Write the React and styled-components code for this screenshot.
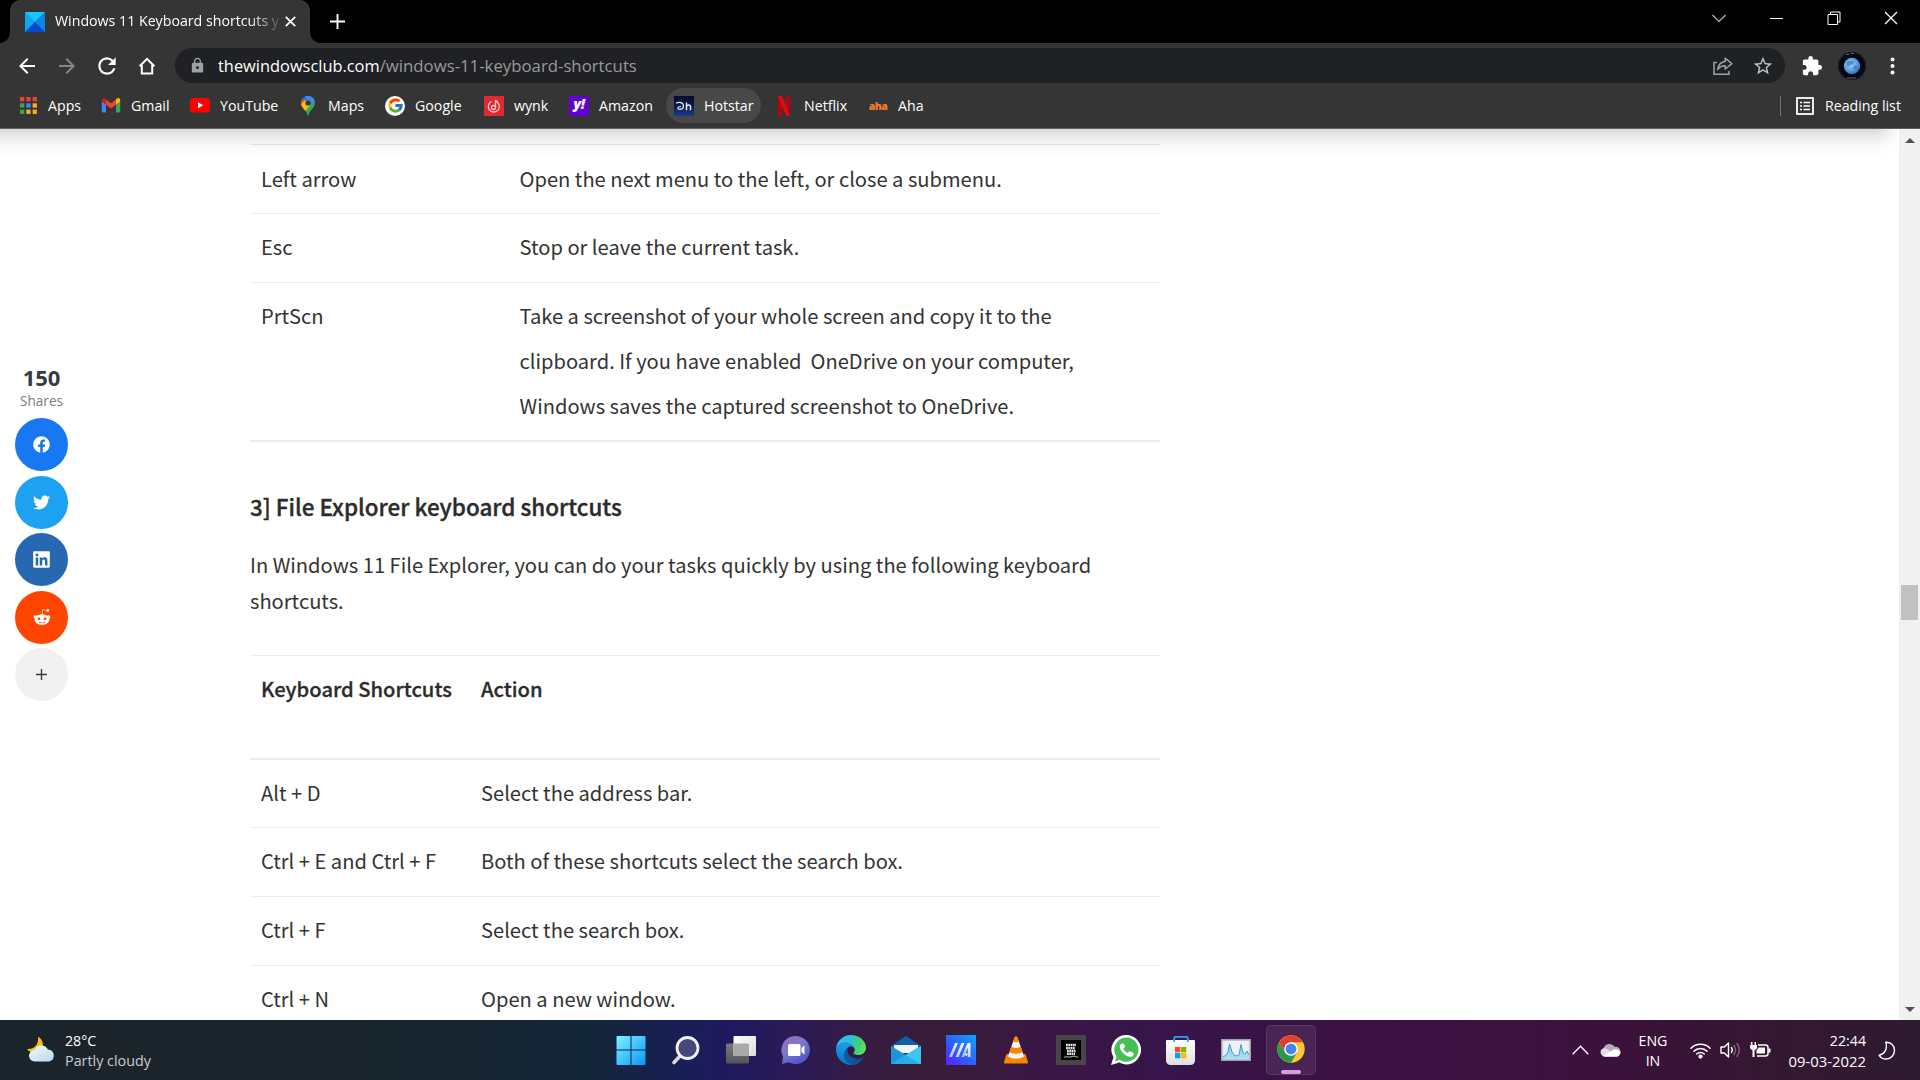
import React from "react";
import styled, { createGlobalStyle, css } from "styled-components";
import { MdArrowBack, MdArrowForward, MdRefresh, MdLock, MdStarBorder, MdExtension } from "react-icons/md";
import { FaFacebook, FaTwitter, FaLinkedin, FaRedditAlien } from "react-icons/fa";
import { FcGoogle } from "react-icons/fc";

const UI_FONT = '"Open Sans", "Noto Sans", sans-serif';
const ARTICLE_FONT = '"Noto Sans CJK SC", "Open Sans", sans-serif';

const GlobalStyle = createGlobalStyle`
  * { box-sizing: border-box; }
  body { margin: 0; background: #fff; overflow: hidden; }
  svg { display: block; flex: none; }
`;

const Screen = styled.div`
  width: 1920px;
  height: 1080px;
  display: flex;
  flex-direction: column;
  overflow: hidden;
  font-family: ${UI_FONT};
`;

/* ---------- tab strip ---------- */

const TabStrip = styled.header`
  height: 43px;
  background: #000;
  display: flex;
  align-items: stretch;
  padding-left: 10px;
`;

const Tab = styled.div`
  position: relative;
  width: 300px;
  background: #353535;
  border-radius: 10px 10px 0 0;
  display: flex;
  align-items: center;
  padding: 0 14px 0 15px;
  &::before,
  &::after {
    content: "";
    position: absolute;
    bottom: 0;
    width: 10px;
    height: 10px;
  }
  &::before {
    left: -10px;
    background: radial-gradient(circle at 0 0, #000 9.5px, #353535 10px);
  }
  &::after {
    right: -10px;
    background: radial-gradient(circle at 100% 0, #000 9.5px, #353535 10px);
  }
`;

const TabTitle = styled.span`
  margin-left: 10px;
  margin-right: auto;
  white-space: nowrap;
  font-size: 14.2px;
  line-height: 20px;
  color: #fff;
  padding-bottom: 1px;
  mask-image: linear-gradient(90deg, #000 194px, rgba(0, 0, 0, 0.5) 212px, rgba(0, 0, 0, 0.1) 225px);
`;

const NewTab = styled.button`
  border: 0;
  background: none;
  padding: 0;
  margin-left: 20px;
`;

const WindowControls = styled.div`
  margin-left: auto;
  display: flex;
`;

const ControlButton = styled.div`
  width: 57.5px;
  display: flex;
  justify-content: center;
  padding-top: 11px;
`;

/* ---------- toolbar ---------- */

const Toolbar = styled.div`
  height: 43px;
  background: #353535;
  display: flex;
  align-items: center;
  padding: 2px 8px 0 7px;
`;

const ToolSlot = styled.div`
  width: 40px;
  height: 35px;
  display: flex;
  align-items: center;
  justify-content: center;
  color: ${(p) => p.$color || "#fff"};
`;

const Omnibox = styled.div`
  flex: 1;
  height: 35px;
  margin: 0 7px 0 8px;
  border-radius: 18px;
  background: #202124;
  display: flex;
  align-items: center;
  padding: 0 2px 0 14px;
`;

const Url = styled.div`
  margin-left: 12px;
  margin-right: auto;
  font-size: 16.78px;
  line-height: 24px;
  color: #9a9a9a;
  padding-top: 1px;
`;

const Host = styled.span`
  color: #fff;
  font-size: 16.4px;
`;

/* ---------- bookmarks ---------- */

const BookmarkBar = styled.nav`
  height: 43px;
  background: #353535;
  border-bottom: 1px solid #5d5d5d;
  display: flex;
  align-items: center;
  gap: 5px;
  padding: 0 10px 3px;
`;

const Bookmark = styled.div`
  height: 35px;
  display: flex;
  align-items: center;
  padding: 0 8px;
  gap: 10px;
  border-radius: 18px;
  ${(p) => p.$active && css`background: #484848;`}
`;

const BookmarkIcon = styled.span`
  width: 20px;
  height: 20px;
  display: flex;
  align-items: center;
  justify-content: center;
`;

const BookmarkLabel = styled.span`
  width: ${(p) => p.$width}px;
  white-space: nowrap;
  font-size: 14.2px;
  line-height: 20px;
  color: #fff;
`;

const BarDivider = styled.span`
  width: 1px;
  height: 20px;
  margin-left: auto;
  margin-right: 1px;
  background: #707070;
`;

const Tile = styled.span`
  width: 20px;
  height: 20px;
  background: ${(p) => p.$bg};
  display: flex;
  align-items: center;
  justify-content: center;
`;

/* ---------- page ---------- */

const Viewport = styled.main`
  position: relative;
  height: 891px;
  display: flex;
  overflow: hidden;
  background: #fff;
`;

const ToolbarShadow = styled.div`
  position: absolute;
  top: 0;
  left: 0;
  right: 21px;
  height: 30px;
  background: linear-gradient(rgba(0, 0, 0, 0.15), rgba(0, 0, 0, 0.075) 9px, rgba(0, 0, 0, 0.02) 19px, transparent);
  mask-image: linear-gradient(90deg, #000 calc(100% - 22px), transparent);
`;

const ShareColumn = styled.aside`
  width: 68px;
  padding: 236px 0 0 15px;
  display: flex;
  flex-direction: column;
  align-items: center;
`;

const ShareCount = styled.div`
  font-size: 22px;
  line-height: 25px;
  font-weight: 700;
  color: #333c43;
`;

const ShareLabel = styled.div`
  font-size: 13.6px;
  line-height: 18px;
  color: #7d7d7d;
  margin: 2px 0 8px;
`;

const ShareButton = styled.div`
  width: 53px;
  height: 53px;
  margin-bottom: 4.5px;
  border-radius: 50%;
  background: ${(p) => p.$bg};
  color: #fff;
  display: flex;
  align-items: center;
  justify-content: center;
`;

const Article = styled.article`
  width: 910px;
  margin-left: 182px;
  padding-top: 15px;
  font-family: ${ARTICLE_FONT};
  font-size: 20.12px;
  color: #333;
`;

const Row = styled.div`
  display: grid;
  grid-template-columns: ${(p) => p.$first}px 1fr;
  min-height: 69px;
  padding: 10px 11px 12px;
  border-top: ${(p) => (p.$afterHead ? "2px" : "1px")} solid #ededed;
  line-height: 45px;
`;

const Table = styled.div`
  display: flex;
  flex-direction: column;
  ${(p) =>
    p.$closed &&
    css`
      border-bottom: 2px solid #ededed;
      ${Row}:first-child {
        padding-top: 11px;
        padding-bottom: 11px;
      }
    `}
`;

const HeadRow = styled(Row)`
  height: 103px;
  font-weight: 500;
  font-size: 20.2px;
  color: #2b2b2b;
  -webkit-text-stroke: 0.3px currentColor;
`;

const Cell = styled.div`
  white-space: pre-line;
`;

const Heading = styled.h3`
  margin: 46px 0 23px;
  font-size: 22.47px;
  line-height: 36px;
  font-weight: 500;
  color: #2b2b2b;
  -webkit-text-stroke: 0.35px currentColor;
`;

const Paragraph = styled.p`
  margin: 0 0 36px;
  line-height: 36px;
  white-space: pre-line;
`;

const Scrollbar = styled.div`
  width: 21px;
  margin-left: auto;
  background: #f1f1f1;
  display: flex;
  flex-direction: column;
  align-items: center;
  padding: 9px 0 8px;
`;

const Arrow = styled.span`
  width: 0;
  height: 0;
  border: 5px solid transparent;
  ${(p) => (p.$down ? "border-top-color: #505050; border-bottom: 0; margin-top: auto;" : "border-bottom-color: #505050; border-top: 0;")}
`;

const Thumb = styled.span`
  width: 17px;
  height: 35px;
  margin-top: 442px;
  background: #c1c1c1;
`;

/* ---------- taskbar ---------- */

const Taskbar = styled.footer`
  height: 60px;
  display: flex;
  align-items: center;
  color: #fff;
  background: linear-gradient(
    90deg,
    #1b242a 0, #1a242b 300px, #17252f 450px, #14263a 590px, #181f55 680px, #1f1a5e 730px,
    #2c1a55 800px, #371c40 870px, #371d38 940px, #3a1746 1040px, #37144a 1180px, #3c1243 1340px,
    #3d1140 1520px, #3a1239 1640px, #341832 1780px, #2e1a30 1920px
  );
`;

const Weather = styled.div`
  width: 603px;
  padding-left: 26px;
  display: flex;
  align-items: center;
  gap: 9px;
`;

const Lines = styled.div`
  width: ${(p) => p.$width || "auto"};
  padding-top: 2px;
  font-size: 14.2px;
  line-height: 20px;
  white-space: nowrap;
  text-align: ${(p) => p.$align || "left"};
`;

const Muted = styled.div`
  color: #c9cccd;
  font-size: 14.35px;
`;

const DateText = styled.div`
  font-size: 14.85px;
`;

const Apps = styled.div`
  display: flex;
`;

const AppSlot = styled.div`
  width: 55px;
  height: 60px;
  display: flex;
  align-items: center;
  justify-content: center;
`;

const ActiveTile = styled.div`
  width: 50px;
  height: 50px;
  border-radius: 5px;
  border: 1px solid rgba(255, 255, 255, 0.09);
  background: rgba(255, 255, 255, 0.08);
  display: flex;
  flex-direction: column;
  align-items: center;
  padding-top: 9px;
`;

const Indicator = styled.span`
  width: 20px;
  height: 4px;
  margin-top: auto;
  border-radius: 2px;
  background: #d99ce4;
`;

const Tray = styled.div`
  margin-left: auto;
  padding-right: 12px;
  display: flex;
  align-items: center;
`;

const TrayItem = styled.div`
  width: ${(p) => p.$w}px;
  display: flex;
  justify-content: center;
`;

/* ---------- browser icons ---------- */

const ClubFavicon = () => (
  <svg width="20" height="20" viewBox="0 0 20 20">
    <rect width="20" height="20" fill="#0a93e8" />
    <path d="M0 0h20L10 10z" fill="#16c8f8" />
    <path d="M0 0l10 10L0 20z" fill="#12a3ee" />
    <path d="M20 0L10 10l10 10z" fill="#0b86e0" />
    <path d="M0 20L10 10l10 10z" fill="#0848cc" />
  </svg>
);

const Cross = ({ size, stroke = 1.3 }) => (
  <svg width={size} height={size} viewBox="0 0 14 14" stroke="#fff" strokeWidth={stroke}>
    <path d="M1 1l12 12M13 1L1 13" />
  </svg>
);

const PlusIcon = ({ size, color, stroke }) => (
  <svg width={size} height={size} viewBox="0 0 16 16" stroke={color} strokeWidth={stroke}>
    <path d="M8 0v16M0 8h16" />
  </svg>
);

const HomeIcon = () => (
  <svg width="18" height="18" viewBox="0 0 18 18" fill="none" stroke="#fff" strokeWidth="2">
    <path d="M3.8 8v8.6h10.4V8" />
    <path d="M1.6 9.2L9 1.8l7.4 7.4" strokeLinejoin="miter" />
  </svg>
);

const ShareIcon = () => (
  <svg width="20" height="18" viewBox="0 0 20 18" fill="none" stroke="#a0a3a6" strokeWidth="1.5">
    <path d="M4 5.5H1v11.7h15V14" />
    <path d="M12.2 1.2L18.8 6.6l-6.6 5.4V8.8C8.700 8.800 6.500 10 4.600 12.600 5.200 8.300 7.600 4.900 12.200 4.400z" strokeLinejoin="round" />
  </svg>
);

const Avatar = () => (
  <svg width="28" height="28" viewBox="0 0 28 28">
    <defs>
      <radialGradient id="moon" cx=".42" cy=".4" r=".65">
        <stop offset="0" stopColor="#9fd2f8" />
        <stop offset=".6" stopColor="#5b9fe2" />
        <stop offset="1" stopColor="#2b62ae" />
      </radialGradient>
    </defs>
    <circle cx="14" cy="14" r="14" fill="#05080f" />
    <circle cx="14" cy="14" r="13.5" fill="none" stroke="#12233e" />
    <circle cx="14" cy="14" r="8.200" fill="url(#moon)" />
    <path d="M9 10c2-2 4 0 5-1s3 1 1 3-3 0-4 2-3-1-2-4zM16 14c2-1 4 0 3 2s-3 2-4 1z" fill="#2f6cb8" opacity=".6" />
    <path d="M8 2.500h3M13 1.500h3M9 26h9" stroke="#5b6167" />
  </svg>
);

const MoreDots = () => (
  <svg width="5" height="18" viewBox="0 0 5 18" fill="#fff">
    <circle cx="2.5" cy="2.500" r="2" />
    <circle cx="2.5" cy="9" r="2" />
    <circle cx="2.5" cy="15.500" r="2" />
  </svg>
);

const APP_COLORS = ["#ea4335", "#ea4335", "#ea4335", "#34a853", "#4285f4", "#fbae17", "#34a853", "#fbae17", "#fbae17"];

const AppsIcon = () => (
  <svg width="17" height="17" viewBox="0 0 17 17">
    {APP_COLORS.map((fill, i) => (
      <rect key={i} x={(i % 3) * 6.3} y={Math.floor(i / 3) * 6.3} width="4.3" height="4.3" fill={fill} />
    ))}
  </svg>
);

const GmailIcon = () => (
  <svg width="20" height="15" viewBox="0 0 20 15">
    <path d="M.8 2.500v10.800c0 .7.500 1.200 1.200 1.200h3V6.700z" fill="#4285f4" />
    <path d="M15 14.500h3c.7 0 1.200-.5 1.200-1.200V2.500L15 6.700z" fill="#34a853" />
    <path d="M15 1.500v5.300l4.200-3.200V2.300c0-1.900-2.100-2.900-3.500-1.700z" fill="#fbbc04" />
    <path d="M5 6.800V1.500l5 3.800 5-3.800v5.300l-5 3.800z" fill="#ea4335" />
    <path d="M.8 2.300v1.300L5 6.800V1.500L4.300.6C2.900-.5.800.5.800 2.300z" fill="#c5221f" />
  </svg>
);

const YouTubeIcon = () => (
  <svg width="20" height="15" viewBox="0 0 20 15">
    <rect width="20" height="14.500" rx="3.500" fill="#f00" />
    <path d="M8 4.200v6l5.200-3z" fill="#fff" />
  </svg>
);

const MapsIcon = () => (
  <svg width="14" height="20" viewBox="0 0 14 20">
    <defs>
      <clipPath id="pin">
        <path d="M7 0a7 7 0 0 0-7 7c0 2.300 1.100 3.900 2.700 5.800C4.700 15.200 6 16.800 6.400 19c.1.600.3.900.6.900s.5-.3.600-.9c.4-2.200 1.700-3.800 3.700-6.200C12.900 10.900 14 9.300 14 7a7 7 0 0 0-7-7z" />
      </clipPath>
    </defs>
    <g clipPath="url(#pin)">
      <rect width="14" height="20" fill="#34a853" />
      <path d="M-1 14L14 -3H-1z" fill="#1a73e8" />
      <path d="M4 0h10v5L7.500 9.500z" fill="#4285f4" />
      <path d="M-1 2L5 5.500-1 11z" fill="#ea4335" />
      <path d="M-1 9l5.200-5 4.800 5.400-6 7z" fill="#fbbc04" />
    </g>
    <circle cx="7" cy="7" r="2.600" fill="#353535" />
  </svg>
);

const GoogleBadge = styled.span`
  width: 20px;
  height: 20px;
  border-radius: 50%;
  background: #fff;
  display: flex;
  align-items: center;
  justify-content: center;
`;

const WynkIcon = () => (
  <Tile $bg="#de2a32">
    <svg width="14" height="14" viewBox="0 0 14 14" fill="none" stroke="#f7c6c8" strokeWidth="1.300">
      <path d="M4.500 2.500a5.500 5.500 0 1 0 5 .2" />
      <circle cx="6.500" cy="8.500" r="2" />
      <path d="M8.500 8.500V1.500c1 .2 2 .8 2.300 2" />
    </svg>
  </Tile>
);

const YahooText = styled.span`
  font: italic 800 14px/18px ${UI_FONT};
  letter-spacing: -0.5px;
  color: #fff;
  padding-bottom: 3px;
`;

const HotstarIcon = () => (
  <Tile $bg="linear-gradient(#070b2b, #0d1b50 55%, #1a3f8f)">
    <svg width="18" height="12" viewBox="0 0 18 12" fill="none" stroke="#e6ebf5" strokeWidth="1.200">
      <path d="M1 3.200c3-1.600 7.500-.8 7.500 2.800S4 10 3 8.600C2.200 7.300 4.500 6.500 6 6.500" />
      <path d="M11.500 2.500v7.800M11.500 7c.5-2.600 4-2.600 4 .2v3.100" strokeWidth="1.500" />
    </svg>
  </Tile>
);

const NetflixIcon = () => (
  <svg width="12" height="20" viewBox="0 0 12 20">
    <path d="M0 0h4v19.600L0 20zM8 0h4v20l-4-.4z" fill="#b1060f" />
    <path d="M0 0h4l8 20-4-.4z" fill="#e50914" />
  </svg>
);

const AhaText = styled.span`
  font: 800 10.5px/14px ${UI_FONT};
  letter-spacing: -0.6px;
  color: #f57a2c;
`;

const ReadingListIcon = () => (
  <svg width="18" height="18" viewBox="0 0 18 18" fill="none" stroke="#fff">
    <rect x="1" y="1" width="16" height="16" strokeWidth="1.800" />
    <path d="M4 5.500h2M4 9h2M4 12.500h2M7.500 5.500H14M7.500 9H14M7.500 12.500H14" strokeWidth="1.700" />
  </svg>
);

/* ---------- taskbar icons ---------- */

const WeatherIcon = () => (
  <svg width="30" height="28" viewBox="0 0 30 28">
    <defs>
      <linearGradient id="cloud" x2="1" y2="1">
        <stop offset="0" stopColor="#f3f8fc" />
        <stop offset="1" stopColor="#b9d9f0" />
      </linearGradient>
    </defs>
    <path d="M12 .5c5.500 3.500 6.500 10 2.500 14.500C10.500 18.500 4 17.500 1 13c8 .5 12-5 11-12.500z" fill="#fbbd13" />
    <path d="M9 25.500a5.700 5.700 0 0 1-.6-11.400A7.600 7.600 0 0 1 22 13.500a6.100 6.100 0 0 1 1.200 12z" fill="url(#cloud)" />
  </svg>
);

const StartIcon = () => (
  <svg width="30" height="30" viewBox="0.5 0 30 30">
    <defs>
      <linearGradient id="win" x2="1" y2="1">
        <stop offset="0" stopColor="#7ff3ff" />
        <stop offset=".5" stopColor="#3fc5fd" />
        <stop offset="1" stopColor="#0c94fb" />
      </linearGradient>
    </defs>
    <path d="M2 1h13v13.500H1V2q0-1 1-1zM16 1h13q1 0 1 1v12.500H16zM1 15.500h14V30H2q-1 0-1-1zM16 15.500h14V29q0 1-1 1H16z" fill="url(#win)" />
  </svg>
);

const SearchIcon = () => (
  <svg width="30" height="30" viewBox="1 0 30 30">
    <path d="M10.500 20.500L4 27.500" stroke="#d8d8da" strokeWidth="3.600" strokeLinecap="round" />
    <circle cx="17.500" cy="13" r="10.500" fill="#47477c" stroke="#f0f0f1" strokeWidth="2.800" />
  </svg>
);

const TaskViewIcon = () => (
  <svg width="30" height="30" viewBox="0 0 30 30">
    <defs>
      <linearGradient id="tv" x2="1" y2="1">
        <stop offset="0" stopColor="#fff" />
        <stop offset="1" stopColor="#dcdcdc" />
      </linearGradient>
      <linearGradient id="tvd" x2="0" y2="1">
        <stop offset="0" stopColor="#797979" />
        <stop offset="1" stopColor="#555" />
      </linearGradient>
    </defs>
    <rect x="0" y="8.500" width="23" height="20" rx="1" fill="url(#tvd)" />
    <rect x="7.500" y="1" width="22.500" height="20" rx="1" fill="url(#tv)" />
    <path d="M7.500 8.500H22a1 1 0 0 1 1 1V21H8.500a1 1 0 0 1-1-1z" fill="#a9a9a9" />
  </svg>
);

const ChatIcon = () => (
  <svg width="30" height="30" viewBox="0 0 30 30">
    <defs>
      <linearGradient id="chat" x2=".6" y2="1">
        <stop offset="0" stopColor="#9a6fb8" />
        <stop offset=".5" stopColor="#7a77cf" />
        <stop offset="1" stopColor="#5057c8" />
      </linearGradient>
    </defs>
    <path d="M15 1a14 14 0 1 1-7 26.200L1 29l1-7.500A14 14 0 0 1 15 1z" fill="url(#chat)" />
    <rect x="7" y="9" width="12.500" height="12" rx="1.500" fill="#fff" />
    <path d="M20.500 13l3-2.500v9l-3-2.500z" fill="#fff" />
  </svg>
);

const EdgeIcon = () => (
  <svg width="30" height="30" viewBox="0 0 256 256">
    <defs>
      <linearGradient id="e1" x1=".2" x2="1" y1=".6" y2=".6">
        <stop offset="0" stopColor="#0c59a4" />
        <stop offset="1" stopColor="#114a8b" />
      </linearGradient>
      <linearGradient id="e2" x1=".6" x2=".3" y1="0" y2="1">
        <stop offset="0" stopColor="#1b9de2" />
        <stop offset=".4" stopColor="#1595df" />
        <stop offset="1" stopColor="#0670c4" />
      </linearGradient>
      <linearGradient id="e3" x1="0" x2="1" y1=".3" y2=".5">
        <stop offset="0" stopColor="#35c1f1" />
        <stop offset=".45" stopColor="#2ebfd4" />
        <stop offset=".75" stopColor="#3fcf7e" />
        <stop offset="1" stopColor="#66e24f" />
      </linearGradient>
    </defs>
    <g transform="translate(-4.63 -4.92)">
      <path fill="url(#e1)" d="M235.68 195.46a93.73 93.73 0 0 1-10.54 4.71 101.87 101.87 0 0 1-35.900 6.460c-47.320 0-88.540-32.550-88.540-74.320A31.480 31.480 0 0 1 117.130 105c-42.800 1.800-53.800 46.400-53.800 72.530 0 73.880 68.090 81.370 82.760 81.370 7.910 0 19.840-2.300 27-4.560l1.310-.44a128.340 128.340 0 0 0 66.600-52.800 4 4 0 0 0-5.320-5.640z" />
      <path fill="url(#e2)" d="M110.34 246.34A79.2 79.2 0 0 1 87.6 225a80.720 80.720 0 0 1 29.530-120c3.120-1.470 8.450-4.130 15.540-4a32.350 32.350 0 0 1 25.690 13 31.880 31.880 0 0 1 6.360 18.660c0-.21 24.460-79.600-80-79.600-43.900 0-80 41.660-80 78.210a130.150 130.150 0 0 0 12.110 56 128 128 0 0 0 156.380 67.110 75.550 75.550 0 0 1-62.780-8z" />
      <path fill="url(#e3)" d="M156.94 153.78c-.81 1.05-3.300 2.500-3.300 5.660 0 2.610 1.700 5.120 4.720 7.230 14.380 10 41.490 8.680 41.560 8.680a59.560 59.560 0 0 0 30.270-8.350 61.380 61.380 0 0 0 30.430-52.880c.26-22.410-8-37.310-11.340-43.910C228.090 28.760 182.350 4.920 132.610 4.920a128 128 0 0 0-128 126.200c.48-36.540 36.800-66.050 80-66.050 3.500 0 23.460.34 42 10.070 16.340 8.580 24.900 18.940 30.850 29.210 6.180 10.670 7.280 24.150 7.280 29.520s-2.740 13.330-7.800 19.910z" />
    </g>
  </svg>
);

const MailIcon = () => (
  <svg width="30" height="30" viewBox="0 0 30 30">
    <path d="M0 11L14 1.600q1-.7 2 0L30 11l-3 8H3z" fill="#0f5fa8" />
    <path d="M3 10h24v8H3z" fill="#f1f3f5" />
    <path d="M0 11l15 9 15-9v17q0 1-1 1H1q-1 0-1-1z" fill="#1c93da" />
    <path d="M30 11L14 20.500 29 29q1 0 1-1z" fill="#3cc6f4" />
    <path d="M0 28.500L14.500 20 29 29H1q-1 0-1-.5z" fill="#27aeea" />
  </svg>
);

const MyAsusIcon = () => (
  <svg width="30" height="30" viewBox="0 0 30 30">
    <defs>
      <linearGradient id="asus" x1="1" x2="0" y2="1">
        <stop offset="0" stopColor="#12a2ff" />
        <stop offset=".5" stopColor="#2866ff" />
        <stop offset="1" stopColor="#5a1dff" />
      </linearGradient>
      <linearGradient id="stroke" x1="1" x2="0" y2="1">
        <stop offset="0" stopColor="#fff" />
        <stop offset="1" stopColor="#a9b9ff" />
      </linearGradient>
    </defs>
    <rect width="30" height="30" fill="url(#asus)" />
    <path d="M3 22L9 8h3L6 22zM9.500 22l6-14h3l-6 14z" fill="url(#stroke)" />
    <path d="M15.500 22L21.500 8H24.500V22H21.800V12.500L18 22z" fill="url(#stroke)" />
    <path d="M19 19.500h2.500" stroke="#eef3ff" strokeWidth="2" />
  </svg>
);

const VlcIcon = () => (
  <svg width="26" height="28" viewBox="0 0 26 28">
    <path d="M3.500 18h19l2.500 8q.3 1.500-1 1.500H2q-1.300 0-1-1.500z" fill="#f98500" />
    <path d="M13 .5q1.300 0 1.700 1.500L21 20.500q-8 4.500-16 0L11.300 2Q11.700.5 13 .5z" fill="#f6f6f6" />
    <path d="M13 .5q1.300 0 1.700 1.500l1.200 3.600q-2.900 1.500-5.800 0L11.300 2Q11.700.5 13 .5zM8.300 10.800q4.700 2.400 9.400 0l1.800 5.400q-6.500 3.300-13 0z" fill="#f98500" />
  </svg>
);

const GtaBox = styled.div`
  width: 30px;
  height: 30px;
  border: 5px solid #474747;
  background: #000;
  display: flex;
  align-items: center;
  justify-content: center;
`;

const GtaIcon = () => (
  <GtaBox>
    <svg width="18" height="18" viewBox="0 0 18 18" fill="none" stroke="#e8e8e8">
      <path d="M4 4h10M4 7.200h9M5 10h8.500M5 12.800h8" strokeWidth="2.300" strokeDasharray="1.800 .5" />
      <path d="M2 16.300c3-1.600 5 .6 8-.8s3 .8 6 .6" strokeWidth="1.100" stroke="#a8a8a8" />
    </svg>
  </GtaBox>
);

const WhatsAppIcon = () => (
  <svg width="30" height="30" viewBox="0 0 30 30">
    <path d="M15.300 0a14.700 14.700 0 1 1-7 27.600L0 30l2.500-7.800A14.700 14.700 0 0 1 15.300 0z" fill="#fff" />
    <path d="M15.300 2.600a12.100 12.100 0 1 1-6.600 22.200L4 26.200l1.500-4.600A12.100 12.100 0 0 1 15.300 2.600z" fill="#45c154" />
    <path transform="translate(6.200 5.500) scale(.76)" d="M20.010 15.380c-1.230 0-2.420-.6-3.530-1.260a.977.977 0 0 0-1.010.24l-1.570 1.970c-2.830-1.350-4.480-2.900-5.890-5.830l1.950-1.660c.27-.28.35-.67.24-1.020-.37-1.110-.86-2.300-1.160-3.230-.2-.54-.45-.69-.99-.69H6.190C4.650 4.500 3 6.240 3.500 8.990 4.500 15.280 11.730 21.500 17.010 21.500c2.710 0 4.490-1.630 4.490-3.180 0-1.500 0-2.200-1.490-2.940z" fill="#fff" />
  </svg>
);

const StoreIcon = () => (
  <svg width="30" height="30" viewBox="0.5 0 30 30">
    <defs>
      <linearGradient id="bag" x2="0" y2="1">
        <stop offset="0" stopColor="#fff" />
        <stop offset="1" stopColor="#dedede" />
      </linearGradient>
    </defs>
    <path d="M8.700 8V3q0-1.200 1.200-1.200h11.200q1.200 0 1.200 1.200v5" fill="none" stroke="#22a7e8" strokeWidth="1.800" />
    <path d="M.5 6q0-1 1-1h27q1 0 1 1v19q0 5-5 5h-19q-5 0-5-5z" fill="url(#bag)" />
    <path d="M8.700 7V4.500M22.300 7V4.500" stroke="#22a7e8" strokeWidth="1.800" />
    <rect x="9.500" y="12" width="5.300" height="5.300" fill="#f25022" />
    <rect x="15.500" y="12" width="5.300" height="5.300" fill="#7fba00" />
    <rect x="9.500" y="18" width="5.300" height="5.300" fill="#00a4ef" />
    <rect x="15.500" y="18" width="5.300" height="5.300" fill="#ffb900" />
  </svg>
);

const MonitorIcon = () => (
  <svg width="30" height="24" viewBox="0 0 30 24">
    <defs>
      <linearGradient id="graph" x2="0" y2="1">
        <stop offset="0" stopColor="#8fcdf0" />
        <stop offset="1" stopColor="#a8e0fb" />
      </linearGradient>
    </defs>
    <rect x=".8" y="1.800" width="28.400" height="20.400" fill="#edf1f4" stroke="#9da5ab" strokeWidth="1.600" />
    <path d="M2 19l3-2 2-3 2-8 2 8 2 3 3 1 2-1 2-10 2 8 2 1 2-3 2 5v3H2z" fill="url(#graph)" />
    <path d="M2 19l3-2 2-3 1.500-8L11 14l2 3 3 1 2-1 2-10.500 2 8.500 2 1 2-3 2 4" fill="none" stroke="#3d9bd0" strokeWidth="1" />
  </svg>
);

const ChromeIcon = () => (
  <svg width="28" height="28" viewBox="0 0 48 48">
    <circle cx="24" cy="24" r="23.500" fill="#fbc934" />
    <path d="M24 12.250h20.350A23.500 23.500 0 0 0 3.650 12.250L13.800 29.900z" fill="#e2402f" />
    <path d="M3.650 12.250A23.500 23.500 0 0 0 24 47.500l10.200-17.620L24 35.700 13.800 29.900z" fill="#269b4c" />
    <circle cx="24" cy="24" r="11.700" fill="#fff" />
    <circle cx="24" cy="24" r="9.300" fill="#4285f4" />
  </svg>
);

const ChevronUp = () => (
  <svg width="17" height="10" viewBox="0 0 17 10" fill="none" stroke="#fff" strokeWidth="1.400">
    <path d="M.7 9.300l7.800-8 7.800 8" />
  </svg>
);

const CloudIcon = () => (
  <svg width="21" height="14" viewBox="0 0 21 14">
    <path d="M4.800 13.500A4.300 4.300 0 0 1 3.600 5.300 6.200 6.200 0 0 1 14.700 3.800 5 5 0 0 1 17 13.500z" fill="#b9a8bd" />
    <path d="M4.800 13.500a4.300 4.300 0 0 1-3-7.300c2-1.700 4.200-.8 6.200.3l10.500 6.500q-.7.500-2 .5z" fill="#e3dce5" />
    <path d="M3 13.200L14 6.300q5-.6 6.300 3-.2 4-3.600 4.200H5z" fill="#fff" />
  </svg>
);

const WifiIcon = () => (
  <svg width="21" height="17" viewBox="0 0 21 17" fill="none" stroke="#fff" strokeWidth="1.500" strokeLinecap="round">
    <path d="M1 6.200a13.300 13.300 0 0 1 19 0M3.900 9.300a9.300 9.300 0 0 1 13.200 0M6.800 12a5.300 5.300 0 0 1 7.400 0" />
    <circle cx="10.500" cy="14.600" r="1.400" fill="#fff" />
  </svg>
);

const VolumeIcon = () => (
  <svg width="21" height="18" viewBox="0 0 21 18" fill="none" stroke="#fff" strokeWidth="1.400" strokeLinecap="round">
    <path d="M1 6h3.300L8.500 2v14L4.300 12H1z" strokeLinejoin="round" />
    <path d="M11.500 6.500q1.600 2.500 0 5" />
    <path d="M14 4.500q3.200 4.500 0 9M17 2.500q4.600 6.500 0 13" opacity=".35" />
  </svg>
);

const BatteryIcon = () => (
  <svg width="21" height="17" viewBox="0 0 21 17" fill="none" stroke="#fff" strokeWidth="1.500">
    <path d="M8 3h7.500a2.500 2.500 0 0 1 2.500 2.500v6a2.500 2.500 0 0 1-2.500 2.500H7" />
    <path d="M8.500 5.500h6.500v6H6.500V8.500z" fill="#fff" stroke="none" />
    <path d="M19.500 6.500v4" strokeWidth="2" />
    <path d="M1.700 0v3M5.300 0v3" />
    <path d="M0 3h7v2.500A2.800 2.800 0 0 1 4.500 8v7h-2V8A2.800 2.800 0 0 1 0 5.500z" fill="#fff" stroke="none" />
  </svg>
);

const MoonIcon = () => (
  <svg width="18" height="19" viewBox="0 0 18 19" fill="none" stroke="#fff" strokeWidth="1.400">
    <path d="M7.800 1.200C12.500.9 16.500 4.500 16.500 9.300 16.500 14.200 12.800 18 8.200 18 5.200 18 2.500 16.500 1.200 14.300 6.500 13 9.800 8 7.800 1.200z" strokeLinejoin="round" />
  </svg>
);

/* ---------- content ---------- */

const BOOKMARKS = [
  { label: "Apps", width: 32, icon: <AppsIcon /> },
  { label: "Gmail", width: 38, icon: <GmailIcon /> },
  { label: "YouTube", width: 57, icon: <YouTubeIcon /> },
  { label: "Maps", width: 36, icon: <MapsIcon /> },
  { label: "Google", width: 48, icon: <GoogleBadge><FcGoogle size={17} /></GoogleBadge> },
  { label: "wynk", width: 34, icon: <WynkIcon /> },
  { label: "Amazon", width: 54, icon: <Tile $bg="#5f01d1"><YahooText>y!</YahooText></Tile> },
  { label: "Hotstar", width: 49, icon: <HotstarIcon />, active: true },
  { label: "Netflix", width: 43, icon: <NetflixIcon /> },
  { label: "Aha", width: 26, icon: <AhaText>aha</AhaText> },
];

const WINDOWS_KEYS = [
  ["Left arrow", "Open the next menu to the left, or close a submenu."],
  ["Esc", "Stop or leave the current task."],
  [
    "PrtScn",
    "Take a screenshot of your whole screen and copy it to the\nclipboard. If you have enabled \u00a0OneDrive on your computer,\nWindows saves the captured screenshot to OneDrive.",
  ],
];

const EXPLORER_KEYS = [
  ["Alt + D", "Select the address bar."],
  ["Ctrl + E and Ctrl + F", "Both of these shortcuts select the search box."],
  ["Ctrl + F", "Select the search box."],
  ["Ctrl + N", "Open a new window."],
];

const TASKBAR_APPS = [
  StartIcon, SearchIcon, TaskViewIcon, ChatIcon, EdgeIcon, MailIcon,
  MyAsusIcon, VlcIcon, GtaIcon, WhatsAppIcon, StoreIcon, MonitorIcon,
];

export default function App() {
  return (
    <Screen>
      <GlobalStyle />
      <TabStrip>
        <Tab>
          <ClubFavicon />
          <TabTitle>Windows 11 Keyboard shortcuts y</TabTitle>
          <Cross size={11} stroke={2.2} />
        </Tab>
        <NewTab aria-label="New tab">
          <PlusIcon size={15} color="#fff" stroke={2} />
        </NewTab>
        <WindowControls>
          <ControlButton>
            <svg width="14" height="14" viewBox="0 0 14 14" fill="none" stroke="#b9b9b9" strokeWidth="1.2">
              <path d="M.5 4l6.500 6.500L13.500 4" />
            </svg>
          </ControlButton>
          <ControlButton>
            <svg width="13" height="14" viewBox="0 0 13 14" stroke="#fff">
              <path d="M0 7.500h13" />
            </svg>
          </ControlButton>
          <ControlButton>
            <svg width="14" height="14" viewBox="0 0 14 14" fill="none" stroke="#fff">
              <path d="M1 3.500h9.500V13.500H1zM3.500 3V1h9.500v10h-2" />
            </svg>
          </ControlButton>
          <ControlButton>
            <Cross size={14} />
          </ControlButton>
        </WindowControls>
      </TabStrip>

      <Toolbar>
        <ToolSlot><MdArrowBack size={24} /></ToolSlot>
        <ToolSlot $color="#868686"><MdArrowForward size={24} /></ToolSlot>
        <ToolSlot><MdRefresh size={26} /></ToolSlot>
        <ToolSlot><HomeIcon /></ToolSlot>
        <Omnibox>
          <MdLock size={17} color="#9aa0a6" />
          <Url><Host>thewindowsclub.com</Host>/windows-11-keyboard-shortcuts</Url>
          <ToolSlot><ShareIcon /></ToolSlot>
          <ToolSlot $color="#bdc1c6"><MdStarBorder size={22} /></ToolSlot>
        </Omnibox>
        <ToolSlot><MdExtension size={22} /></ToolSlot>
        <ToolSlot><Avatar /></ToolSlot>
        <ToolSlot><MoreDots /></ToolSlot>
      </Toolbar>

      <BookmarkBar>
        {BOOKMARKS.map((b) => (
          <Bookmark key={b.label} $active={b.active}>
            <BookmarkIcon>{b.icon}</BookmarkIcon>
            <BookmarkLabel $width={b.width}>{b.label}</BookmarkLabel>
          </Bookmark>
        ))}
        <BarDivider />
        <Bookmark>
          <BookmarkIcon><ReadingListIcon /></BookmarkIcon>
          <BookmarkLabel $width={77}>Reading list</BookmarkLabel>
        </Bookmark>
      </BookmarkBar>

      <Viewport>
        <ShareColumn>
          <ShareCount>150</ShareCount>
          <ShareLabel>Shares</ShareLabel>
          <ShareButton $bg="#1877f2"><FaFacebook size={17} /></ShareButton>
          <ShareButton $bg="#1da1f2"><FaTwitter size={17} /></ShareButton>
          <ShareButton $bg="#2867b2"><FaLinkedin size={19} /></ShareButton>
          <ShareButton $bg="#ff4500"><FaRedditAlien size={18} /></ShareButton>
          <ShareButton $bg="#f1f1f1"><PlusIcon size={11} color="#333c43" stroke={2} /></ShareButton>
        </ShareColumn>
        <Article>
          <Table $closed>
            {WINDOWS_KEYS.map(([key, action]) => (
              <Row key={key} $first={258.5}>
                <Cell>{key}</Cell>
                <Cell>{action}</Cell>
              </Row>
            ))}
          </Table>
          <Heading>3] File Explorer keyboard shortcuts</Heading>
          <Paragraph>
            {"In Windows 11 File Explorer, you can do your tasks quickly by using the following keyboard\nshortcuts."}
          </Paragraph>
          <Table>
            <HeadRow $first={220}>
              <Cell>Keyboard Shortcuts</Cell>
              <Cell>Action</Cell>
            </HeadRow>
            {EXPLORER_KEYS.map(([key, action], i) => (
              <Row key={key} $first={220} $afterHead={i === 0}>
                <Cell>{key}</Cell>
                <Cell>{action}</Cell>
              </Row>
            ))}
          </Table>
        </Article>
        <Scrollbar>
          <Arrow />
          <Thumb />
          <Arrow $down />
        </Scrollbar>
        <ToolbarShadow />
      </Viewport>

      <Taskbar>
        <Weather>
          <WeatherIcon />
          <Lines>
            <div>28°C</div>
            <Muted>Partly cloudy</Muted>
          </Lines>
        </Weather>
        <Apps>
          {TASKBAR_APPS.map((Icon, i) => (
            <AppSlot key={i}><Icon /></AppSlot>
          ))}
          <AppSlot>
            <ActiveTile>
              <ChromeIcon />
              <Indicator />
            </ActiveTile>
          </AppSlot>
        </Apps>
        <Tray>
          <TrayItem $w={20}><ChevronUp /></TrayItem>
          <TrayItem $w={40}><CloudIcon /></TrayItem>
          <TrayItem $w={46}>
            <Lines $align="center">
              <div>ENG</div>
              <div>IN</div>
            </Lines>
          </TrayItem>
          <TrayItem $w={48}><WifiIcon /></TrayItem>
          <TrayItem $w={12}><VolumeIcon /></TrayItem>
          <TrayItem $w={48}><BatteryIcon /></TrayItem>
          <Lines $width="82px" $align="right">
            <div>22:44</div>
            <DateText>09-03-2022</DateText>
          </Lines>
          <TrayItem $w={42}><MoonIcon /></TrayItem>
        </Tray>
      </Taskbar>
    </Screen>
  );
}
